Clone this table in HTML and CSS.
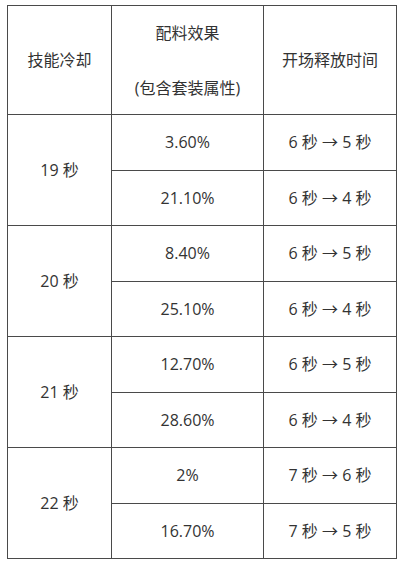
FILE: index.html
```html
<!DOCTYPE html>
<html lang="zh">
<head>
<meta charset="utf-8">
<link rel="stylesheet" href="styles.css">
</head>
<body>
<table class="tbl">
  <colgroup>
    <col class="c1"><col class="c2"><col class="c3">
  </colgroup>
  <thead>
    <tr class="head">
      <th>技能冷却</th>
      <th><div class="two"><span>配料效果</span><span>(包含套装属性)</span></div></th>
      <th>开场释放时间</th>
    </tr>
  </thead>
  <tbody>
    <tr><td rowspan="2">19 秒</td><td>3.60%</td><td>6 秒 → 5 秒</td></tr>
    <tr><td>21.10%</td><td>6 秒 → 4 秒</td></tr>
    <tr><td rowspan="2">20 秒</td><td>8.40%</td><td>6 秒 → 5 秒</td></tr>
    <tr><td>25.10%</td><td>6 秒 → 4 秒</td></tr>
    <tr><td rowspan="2">21 秒</td><td>12.70%</td><td>6 秒 → 5 秒</td></tr>
    <tr><td>28.60%</td><td>6 秒 → 4 秒</td></tr>
    <tr><td rowspan="2">22 秒</td><td>2%</td><td>7 秒 → 6 秒</td></tr>
    <tr><td>16.70%</td><td>7 秒 → 5 秒</td></tr>
  </tbody>
</table>
</body>
</html>
```
FILE: styles.css
```css
html, body {
  background: #ffffff;
}
body {
  margin: 0;
  padding: 5px 0 0 7px;
  font-family: "Open Sans", "Noto Sans CJK SC", sans-serif;
  color: #333333;
  font-size: 16px;
}
.tbl {
  border-collapse: collapse;
  table-layout: fixed;
  width: 389px;
  border: 1px solid #4a4a4a;
}
.c1 { width: 104px; }
.c2 { width: 152px; }
.c3 { width: 133px; }
.tbl th, .tbl td {
  border: 1px solid #4a4a4a;
  text-align: center;
  vertical-align: middle;
  font-weight: normal;
  padding: 0;
  line-height: 22px;
}
.tbl .head th {
  height: 108px;
}
.tbl tbody tr {
  height: 55.5px;
}
.two {
  display: flex;
  flex-direction: column;
  align-items: center;
  gap: 33px;
}
```
